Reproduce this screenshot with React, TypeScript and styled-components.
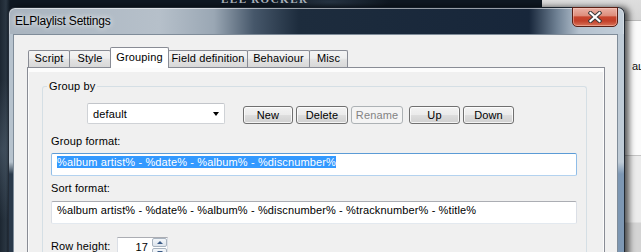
import React from "react";
import styled, { createGlobalStyle } from "styled-components";

const GlobalStyle = createGlobalStyle`
  html, body { margin: 0; padding: 0; }
  body { background: #121b26; overflow: hidden; }
  #root { width: 641px; height: 252px; }
`;

const Desktop = styled.div`
  position: relative;
  width: 641px;
  height: 252px;
  overflow: hidden;
  font-family: "Liberation Sans", Arial, sans-serif;
  background:
    radial-gradient(ellipse 40px 70px at 2px 150px, rgba(110, 130, 150, 0.35), transparent),
    radial-gradient(ellipse 60px 10px at 330px 2px, rgba(60, 80, 100, 0.5), transparent),
    linear-gradient(90deg, #1c2631 0px, #2b3743 6px, #0f1822 10px);
`;

const DesktopCaption = styled.div`
  position: absolute;
  left: 221px;
  top: -7px;
  font: bold 11px "Liberation Serif", serif;
  letter-spacing: 1.5px;
  color: #aeb6bf;
`;

const BackWindow = styled.div`
  position: absolute;
  left: 542px;
  top: -12px;
  width: 120px;
  height: 280px;
  display: flex;
  flex-direction: column;
  background: #f2f2f2;
`;

const BackToolbar = styled.div`
  height: 32px;
  flex: none;
  background: linear-gradient(180deg, #e2e2e2, #d6d6d6);
  border-bottom: 1px solid #b9b9b9;
`;

const BackList = styled.div`
  height: 135px;
  flex: none;
  background: #fbfbfb;
  border-bottom: 1px solid #c4c4c4;
  padding: 39px 0 0 90px;
  box-sizing: border-box;
  font: 11px "Liberation Sans", Arial, sans-serif;
  color: #111;
`;

const BackLower = styled.div`
  flex: 1;
  background: linear-gradient(180deg, #ececec 0, #ececec 66px, #d4d4d4 67px, #d4d4d4 100%);
`;

const Window = styled.div`
  position: absolute;
  left: 8px;
  top: 7px;
  width: 617px;
  height: 262px;
  box-sizing: border-box;
  display: flex;
  flex-direction: column;
  border: 1px solid rgba(18, 26, 36, 0.9);
  border-radius: 7px 7px 0 0;
  background: linear-gradient(
    90deg,
    #a9b4bf 0px,
    #b6c0ca 150px,
    #9aa7b4 205px,
    #46576a 245px,
    #1d2c3d 290px,
    #17263a 520px,
    #6f8194 548px,
    #b4c1ce 570px,
    #c3cfda 617px
  );
  box-shadow:
    4px 0 6px rgba(0, 0, 0, 0.65),
    inset 0 1px 0 rgba(255, 255, 255, 0.55),
    inset 1px 0 0 rgba(255, 255, 255, 0.3),
    inset -1px 0 0 rgba(255, 255, 255, 0.3);
`;

const TitleBar = styled.div`
  height: 26px;
  flex: none;
  display: flex;
  align-items: flex-start;
`;

const Title = styled.div`
  margin: 6px 0 0 6px;
  font: 12px "Liberation Sans", Arial, sans-serif;
  letter-spacing: -0.2px;
  line-height: 15px;
  color: #000;
  text-shadow: 0 0 5px rgba(255, 255, 255, 0.9), 0 0 9px rgba(255, 255, 255, 0.6);
`;

const CloseButton = styled.div`
  margin: -1px 6px 0 auto;
  width: 46px;
  height: 20px;
  box-sizing: border-box;
  border: 1px solid #5a1f15;
  border-radius: 0 0 5px 5px;
  background: linear-gradient(
    180deg,
    #eab2a6 0%,
    #de8e7c 42%,
    #c8462e 50%,
    #c2402a 72%,
    #d9745a 100%
  );
  box-shadow: inset 0 0 0 1px rgba(255, 210, 200, 0.45);
  display: flex;
  align-items: center;
  justify-content: center;
`;

const Body = styled.div`
  flex: 1;
  display: flex;
  min-height: 0;
`;

const FrameSide = styled.div<{ $w: number; $top: string; $bottom: string }>`
  width: ${(p) => p.$w}px;
  flex: none;
  background: linear-gradient(
    180deg,
    ${(p) => p.$top} 0px,
    ${(p) => p.$top} 128px,
    ${(p) => p.$bottom} 140px,
    ${(p) => p.$bottom} 100%
  );
`;

const Client = styled.div`
  flex: 1;
  min-width: 0;
  display: flex;
  flex-direction: column;
  border: 1px solid #7f8c99;
  border-bottom: none;
  background: #f0f0f0;
  padding: 12px 12px 0 13px;
  letter-spacing: 0.13px;
`;

const TabRow = styled.div`
  height: 20px;
  flex: none;
  display: flex;
  align-items: flex-end;
  padding-left: 1px;
  position: relative;
  z-index: 1;
`;

const Tab = styled.div<{ $w: number; $active?: boolean }>`
  box-sizing: border-box;
  width: ${(p) => p.$w}px;
  height: ${(p) => (p.$active ? 21 : 17)}px;
  margin-bottom: ${(p) => (p.$active ? -1 : 0)}px;
  margin-left: -1px;
  &:first-child {
    margin-left: 0;
  }
  border: 1px solid #898c95;
  border-bottom: none;
  border-radius: 2px 2px 0 0;
  background: ${(p) =>
    p.$active
      ? "#ffffff"
      : "linear-gradient(180deg, #f4f4f4 0%, #eeeeee 45%, #e2e2e2 55%, #d8d8d8 100%)"};
  position: relative;
  z-index: ${(p) => (p.$active ? 2 : 1)};
  font-size: 11px;
  line-height: ${(p) => (p.$active ? 18 : 15)}px;
  text-align: center;
  color: #000;
  white-space: nowrap;
`;

const Panel = styled.div`
  flex: 1;
  display: flex;
  border: 1px solid #898c95;
  border-bottom: none;
  background: #fcfcfc;
  padding: 4px 1px 0 1px;
`;

const Page = styled.div`
  flex: 1;
  min-width: 0;
  background: #f0f0f0;
  display: flex;
  flex-direction: column;
`;

const GroupBox = styled.fieldset`
  margin: 8px 16px 0 13px;
  padding: 0;
  min-width: 0;
  border: 1px solid #d5dfe5;
  border-bottom: none;
  border-radius: 3px 3px 0 0;
`;

const Legend = styled.legend`
  margin-left: 4px;
  padding: 0 2px;
  font-size: 11px;
  line-height: 13px;
  color: #000;
`;

const GroupContent = styled.div`
  display: flex;
  flex-direction: column;
  padding: 0 9px 0 8px;
`;

const ComboRow = styled.div`
  display: flex;
  align-items: flex-start;
  margin-top: 10px;
`;

const Combo = styled.div`
  width: 138px;
  height: 21px;
  box-sizing: border-box;
  margin-left: 36px;
  margin-right: 18px;
  border: 1px solid #cfd2d6;
  border-top-color: #c2c5ca;
  border-radius: 2px;
  background: #fff;
  display: flex;
  align-items: center;
  justify-content: space-between;
  padding: 0 5px 0 5px;
  font-size: 11px;
  color: #000;
`;

const Arrow = styled.span`
  width: 0;
  height: 0;
  border-left: 3.5px solid transparent;
  border-right: 3.5px solid transparent;
  border-top: 4px solid #000;
  margin-top: 1px;
`;

const Button = styled.button<{ $w: number; $gap: number }>`
  width: ${(p) => p.$w}px;
  height: 18px;
  margin: 3px 0 0 ${(p) => p.$gap}px;
  box-sizing: border-box;
  border: 1px solid #707070;
  border-radius: 3px;
  padding: 0;
  background: linear-gradient(180deg, #f3f3f3 0%, #ebebeb 48%, #dddddd 52%, #d0d0d0 100%);
  box-shadow: inset 0 0 0 1px rgba(255, 255, 255, 0.75);
  font: 11px "Liberation Sans", Arial, sans-serif;
  letter-spacing: 0.13px;
  line-height: 15px;
  color: #000;
  &:disabled {
    border-color: #adb2b5;
    background: #f4f4f4;
    box-shadow: none;
    color: #838383;
  }
`;

const Label = styled.div<{ $mt: number }>`
  margin-top: ${(p) => p.$mt}px;
  height: 13px;
  font-size: 11px;
  line-height: 13px;
  color: #000;
`;

const TextField = styled.div<{ $focused?: boolean; $mt: number }>`
  margin-top: ${(p) => p.$mt}px;
  width: 526px;
  height: 23px;
  box-sizing: border-box;
  border: 1px solid;
  border-color: ${(p) =>
    p.$focused ? "#5b9bd6 #8fbde8 #b3d2ef #8fbde8" : "#abadb3 #dbdfe6 #e3e9ef #dbdfe6"};
  border-radius: 2px;
  background: #fff;
  padding: 1px 0 0 5px;
  font-size: 11px;
  line-height: 14px;
  white-space: nowrap;
  overflow: hidden;
  color: #000;
`;

const Selected = styled.span`
  background: #3399ff;
  color: #fff;
`;

const SpinRow = styled.div`
  margin-top: 13px;
  display: flex;
  align-items: flex-start;
`;

const SpinLabel = styled.div`
  width: 66px;
  font-size: 11px;
  line-height: 13px;
  margin-top: 3px;
  color: #000;
`;

const SpinBox = styled.div`
  display: flex;
  height: 21px;
  box-sizing: border-box;
  border: 1px solid;
  border-color: #abadb3 #dbdfe6 #e3e9ef #dbdfe6;
  background: #fff;
`;

const SpinValue = styled.div`
  width: 34px;
  box-sizing: border-box;
  text-align: right;
  padding: 2px 4px 0 0;
  font-size: 11px;
  line-height: 14px;
`;

const SpinButtons = styled.div`
  width: 15px;
  display: flex;
  flex-direction: column;
  gap: 1px;
`;

const SpinArrow = styled.div<{ $up?: boolean }>`
  height: 9px;
  box-sizing: border-box;
  border: 1px solid #a9b4c0;
  border-radius: 2px;
  background: linear-gradient(180deg, #f3f6fa, #dde4ec);
  display: flex;
  align-items: center;
  justify-content: center;
  &::after {
    content: "";
    width: 0;
    height: 0;
    border-left: 3px solid transparent;
    border-right: 3px solid transparent;
    ${(p) => (p.$up ? "border-bottom: 3px solid #3a5a86;" : "border-top: 3px solid #3a5a86;")}
  }
`;

const tabs = [
  { label: "Script", w: 42 },
  { label: "Style", w: 42 },
  { label: "Grouping", w: 59, active: true },
  { label: "Field definition", w: 80 },
  { label: "Behaviour", w: 63 },
  { label: "Misc", w: 39 },
];

const buttons = [
  { label: "New", w: 50, gap: 0 },
  { label: "Delete", w: 52, gap: 3 },
  { label: "Rename", w: 52, gap: 3, disabled: true },
  { label: "Up", w: 51, gap: 6 },
  { label: "Down", w: 51, gap: 3 },
];

export default function App() {
  return (
    <>
      <GlobalStyle />
      <Desktop>
        <DesktopCaption>ELL ROCKER</DesktopCaption>
        <BackWindow>
          <BackToolbar />
          <BackList>аш</BackList>
          <BackLower />
        </BackWindow>
        <Window>
          <TitleBar>
            <Title>ELPlaylist Settings</Title>
            <CloseButton>
              <svg width="14" height="12" viewBox="0 0 14 12">
                <path d="M2.5 2 L11.5 10 M11.5 2 L2.5 10" stroke="#3b3b3b" strokeWidth="4.2" strokeLinecap="square" />
                <path d="M2.5 2 L11.5 10 M11.5 2 L2.5 10" stroke="#ffffff" strokeWidth="2.2" strokeLinecap="square" />
              </svg>
            </CloseButton>
          </TitleBar>
          <Body>
            <FrameSide $w={4} $top="#b7c3ce" $bottom="#2a394a" />
            <Client>
              <TabRow>
                {tabs.map((t) => (
                  <Tab key={t.label} $w={t.w} $active={t.active}>
                    {t.label}
                  </Tab>
                ))}
              </TabRow>
              <Panel>
                <Page>
                  <GroupBox>
                    <Legend>Group by</Legend>
                    <GroupContent>
                      <ComboRow>
                        <Combo>
                          <span>default</span>
                          <Arrow />
                        </Combo>
                        {buttons.map((b) => (
                          <Button key={b.label} $w={b.w} $gap={b.gap} disabled={b.disabled}>
                            {b.label}
                          </Button>
                        ))}
                      </ComboRow>
                      <Label $mt={11}>Group format:</Label>
                      <TextField $focused $mt={5}>
                        <Selected>%album artist% - %date% - %album% - %discnumber%</Selected>
                      </TextField>
                      <Label $mt={6}>Sort format:</Label>
                      <TextField $mt={6}>
                        %album artist% - %date% - %album% - %discnumber% - %tracknumber% - %title%
                      </TextField>
                      <SpinRow>
                        <SpinLabel>Row height:</SpinLabel>
                        <SpinBox>
                          <SpinValue>17</SpinValue>
                          <SpinButtons>
                            <SpinArrow $up />
                            <SpinArrow />
                          </SpinButtons>
                        </SpinBox>
                      </SpinRow>
                    </GroupContent>
                  </GroupBox>
                </Page>
              </Panel>
            </Client>
            <FrameSide $w={6} $top="#bfcbd6" $bottom="#7d97b3" />
          </Body>
        </Window>
      </Desktop>
    </>
  );
}
